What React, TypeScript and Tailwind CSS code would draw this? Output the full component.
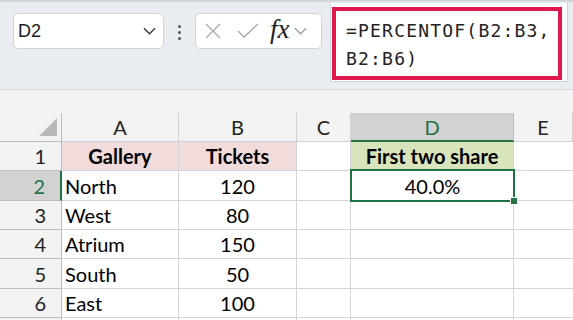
import React from 'react';

const cols = ['A', 'B', 'C', 'D', 'E'];

const rows: { n: number; a: string; b: string; d: string }[] = [
  { n: 1, a: 'Gallery', b: 'Tickets', d: 'First two share' },
  { n: 2, a: 'North', b: '120', d: '40.0%' },
  { n: 3, a: 'West', b: '80', d: '' },
  { n: 4, a: 'Atrium', b: '150', d: '' },
  { n: 5, a: 'South', b: '50', d: '' },
  { n: 6, a: 'East', b: '100', d: '' },
  { n: 7, a: '', b: '', d: '' },
];

const Chevron = ({ className }: { className?: string }) => (
  <svg viewBox="0 0 14 8" className={className} fill="none" stroke="currentColor" strokeWidth={1.4}>
    <path d="M1 1l6 6 6-6" />
  </svg>
);

export default function App() {
  return (
    <div className="w-[573px] h-[320px] overflow-hidden bg-[#f3f3f3] font-['Lato',sans-serif]">
      {/* Top toolbar with name box and formula bar */}
      <div className="relative h-[90px] bg-[#e9edf1] border-b border-[#d6d9dc] flex items-start">
        <div className="absolute top-0 left-0 right-0 h-[3px] bg-gradient-to-b from-[#c9cdd1] to-[#e9edf1]" />
        <div className="mt-[13px] ml-[13px] w-[151px] h-[36px] bg-white border border-[#d2d5d8] rounded-[5px] flex items-center justify-between pl-[4px] pr-[7px]">
          <span className="font-['Liberation_Sans',sans-serif] text-[18px] text-[#1b1b1b]">D2</span>
          <Chevron className="w-[13px] h-[8px] text-[#333]" />
        </div>
        <div className="mt-[25px] ml-[14px] flex flex-col gap-[3px]">
          <span className="w-[3px] h-[3px] rounded-full bg-[#555]" />
          <span className="w-[3px] h-[3px] rounded-full bg-[#555]" />
          <span className="w-[3px] h-[3px] rounded-full bg-[#555]" />
        </div>
        <div className="mt-[13px] ml-[14px] w-[127px] h-[36px] bg-white border border-[#d2d5d8] rounded-[5px] flex items-center pl-[9px]">
          <svg viewBox="0 0 16 16" className="w-[16px] h-[16px]" stroke="#a8a8a8" strokeWidth={1.3} fill="none">
            <path d="M1 1l14 14M15 1L1 15" />
          </svg>
          <svg viewBox="0 0 22 16" className="ml-[16px] w-[22px] h-[16px]" stroke="#a8a8a8" strokeWidth={1.3} fill="none">
            <path d="M1 8l6 6L21 1" />
          </svg>
          <span className="ml-[11px] font-['Liberation_Serif',serif] italic text-[27px] leading-none text-[#222] -mt-[4px]">fx</span>
          <Chevron className="ml-[4px] w-[13px] h-[8px] text-[#9a9a9a]" />
        </div>
        <div className="ml-[8px] w-[238px] h-[82px] bg-white border-x border-b border-[#d0d3d6] pl-[1px] pt-[7px] pr-[5px]">
          <div className="h-[73px] border-[4px] border-[#e0174b] pl-[10px] pt-[6px] font-['DejaVu_Sans_Mono',monospace] text-[18px] leading-[28px] tracking-[1.2px] text-[#222]">
            <div>=PERCENTOF(B2:B3,</div>
            <div>B2:B6)</div>
          </div>
        </div>
      </div>

      {/* Sheet grid */}
      <div className="mt-[23px] grid grid-cols-[62px_117px_118px_54px_163px_1fr] grid-rows-[29px_29px_30px_29px_29px_30px_29px_29px] text-[20px] text-black">
        <div className="relative bg-[#f3f3f3] border-r border-b border-[#bdbdbd]">
          <svg viewBox="0 0 18 18" className="absolute left-[39px] top-[5px] w-[18px] h-[18px]">
            <path d="M18 0L18 18L0 18Z" fill="#b8b8b8" />
          </svg>
        </div>
        {cols.map((c) => (
          <div
            key={c}
            className={
              c === 'D'
                ? 'flex items-center justify-center bg-[#d2d2d2] text-[#217346] border-r border-[#bdbdbd] border-b-2 border-b-[#217346]'
                : 'flex items-center justify-center bg-[#f3f3f3] text-[#222] border-r border-b border-[#d0d0d0]'
            }
          >
            {c}
          </div>
        ))}
        {rows.map((r) => (
          <React.Fragment key={r.n}>
            <div
              className={
                r.n === 2
                  ? 'flex items-center justify-end pr-[15px] bg-[#d2d2d2] text-[#217346] border-b border-[#bdbdbd] border-r-2 border-r-[#217346]'
                  : 'flex items-center justify-end pr-[15px] bg-[#f3f3f3] text-[#222] border-b border-r border-[#bdbdbd]'
              }
            >
              {r.n < 7 ? r.n : ''}
            </div>
            <div
              className={
                r.n === 1
                  ? 'flex items-center justify-center font-bold bg-[#f2dcdb] border-r border-b border-[#d4d4d4]'
                  : 'flex items-center pl-[3px] bg-white border-r border-b border-[#d4d4d4]'
              }
            >
              {r.a}
            </div>
            <div
              className={
                r.n === 1
                  ? 'flex items-center justify-center font-bold bg-[#f2dcdb] border-r border-b border-[#d4d4d4]'
                  : 'flex items-center justify-center bg-white border-r border-b border-[#d4d4d4]'
              }
            >
              {r.b}
            </div>
            <div className="bg-white border-r border-b border-[#d4d4d4]" />
            {r.n === 1 ? (
              <div className="flex items-center justify-center font-bold bg-[#d8e4bc] border-r border-b border-[#d4d4d4]">{r.d}</div>
            ) : r.n === 2 ? (
              <div className="relative flex items-center justify-center bg-white">
                {r.d}
                <div className="absolute -left-[1px] -top-[2px] -right-[1px] -bottom-[1px] border-2 border-[#217346]" />
                <div className="absolute -right-[4px] -bottom-[4px] w-[8px] h-[8px] bg-[#217346] border border-white" />
              </div>
            ) : (
              <div className="bg-white border-r border-b border-[#d4d4d4]" />
            )}
            <div className="bg-white border-b border-[#d4d4d4]" />
          </React.Fragment>
        ))}
      </div>
    </div>
  );
}
